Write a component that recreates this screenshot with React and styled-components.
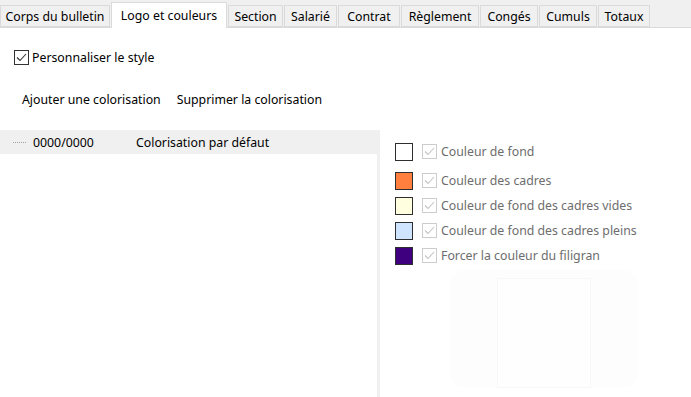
import React from "react";
import styled, { createGlobalStyle } from "styled-components";

const GlobalStyle = createGlobalStyle`
  html, body {
    margin: 0;
    padding: 0;
    background: #ffffff;
  }
  body {
    font-family: "Noto Sans", "Open Sans", sans-serif;
    font-size: 12.3px;
    color: #000;
  }
`;

const Page = styled.div`
  width: 691px;
  height: 397px;
  display: flex;
  flex-direction: column;
  overflow: hidden;
  background: #fff;
`;

const TabBar = styled.div`
  height: 28px;
  flex: none;
  display: flex;
  align-items: flex-end;
  background: #f0f0f0;
  border-bottom: 1px solid #dadada;
  box-sizing: border-box;
`;

const Tab = styled.div`
  box-sizing: border-box;
  width: ${({ $w }) => $w}px;
  height: ${({ $active }) => ($active ? 26 : 22)}px;
  margin-bottom: ${({ $active }) => ($active ? -1 : 0)}px;
  margin-right: 1px;
  display: flex;
  align-items: ${({ $active }) => ($active ? "flex-start" : "center")};
  justify-content: center;
  padding-top: ${({ $active }) => ($active ? 4 : 1)}px;
  background: ${({ $active }) => ($active ? "#fff" : "#f0f0f0")};
  border: 1px solid #dadada;
  border-bottom: ${({ $active }) => ($active ? "none" : "1px solid #dadada")};
  white-space: nowrap;
`;

const Content = styled.div`
  flex: 1;
  display: flex;
  flex-direction: column;
  min-height: 0;
`;

const StyleRow = styled.label`
  display: flex;
  align-items: center;
  gap: 3px;
  margin: 21px 0 0 14px;
  height: 16px;
`;

const Actions = styled.div`
  display: flex;
  gap: 16px;
  margin: 26px 0 0 22px;
  height: 16px;
  align-items: center;
`;

const Action = styled.span`
  cursor: default;
`;

const Split = styled.div`
  flex: 1;
  display: flex;
  margin-top: 23px;
  min-height: 0;
`;

const List = styled.div`
  width: 377px;
  flex: none;
  border-right: 3px solid #f0f0f0;
  box-sizing: content-box;
`;

const ListRow = styled.div`
  height: 24px;
  display: flex;
  align-items: center;
  background: ${({ $selected }) => ($selected ? "#f0f0f0" : "transparent")};
  margin-right: -3px;
  padding-left: 13px;
`;

const TreeDots = styled.span`
  width: 13px;
  height: 0;
  border-top: 1px dotted #a0a0a0;
  margin-right: 7px;
  margin-top: 1px;
`;

const Code = styled.span`
  width: 103px;
`;

const Label = styled.span``;

const ColorPanel = styled.div`
  flex: 1;
  display: flex;
  flex-direction: column;
  padding: 12px 0 0 15px;
  position: relative;
`;

const ColorRow = styled.div`
  display: flex;
  align-items: center;
  height: 19px;
  margin-bottom: ${({ $gap }) => $gap}px;
`;

const Swatch = styled.div`
  width: 18px;
  height: 18px;
  box-sizing: border-box;
  border: 1.5px solid #2e2e2e;
  background: ${({ $color }) => $color};
  margin-right: 9px;
`;

const DisabledText = styled.span`
  color: #6d6d6d;
  margin-left: 4px;
`;

const Preview = styled.div`
  position: absolute;
  left: 70px;
  top: 140px;
  width: 188px;
  height: 118px;
  border-radius: 16px;
  background: #fdfdfd;
  display: flex;
  justify-content: center;
`;

const PreviewSheet = styled.div`
  width: 92px;
  height: 108px;
  margin-top: 8px;
  border: 1px solid #f7f7f7;
  background: #fefefe;
`;

const CheckBox = ({ disabled }) => (
  <svg width="15" height="15" viewBox="0 0 15 15" style={{ flex: "none" }}>
    <rect
      x="0.5"
      y="0.5"
      width="14"
      height="14"
      fill="#fff"
      stroke={disabled ? "#cccccc" : "#333333"}
    />
    <path
      d="M3 7.5 L6 10.5 L12 4"
      fill="none"
      stroke={disabled ? "#c4c4c4" : "#333333"}
      strokeWidth="1.1"
    />
  </svg>
);

const tabs = [
  { label: "Corps du bulletin", w: 110 },
  { label: "Logo et couleurs", w: 116, active: true },
  { label: "Section", w: 55 },
  { label: "Salarié", w: 53 },
  { label: "Contrat", w: 62 },
  { label: "Règlement", w: 78 },
  { label: "Congés", w: 58 },
  { label: "Cumuls", w: 58 },
  { label: "Totaux", w: 52 },
];

const colors = [
  { color: "#ffffff", label: "Couleur de fond", gap: 10 },
  { color: "#ff7f3f", label: "Couleur des cadres", gap: 6 },
  { color: "#ffffdf", label: "Couleur de fond des cadres vides", gap: 6 },
  { color: "#cfe5ff", label: "Couleur de fond des cadres pleins", gap: 6 },
  { color: "#3f007f", label: "Forcer la couleur du filigran", gap: 0 },
];

export default function App() {
  return (
    <>
      <GlobalStyle />
      <Page>
        <TabBar>
          {tabs.map((t) => (
            <Tab key={t.label} $w={t.w} $active={t.active}>
              {t.label}
            </Tab>
          ))}
        </TabBar>
        <Content>
          <StyleRow>
            <CheckBox />
            <span>Personnaliser le style</span>
          </StyleRow>
          <Actions>
            <Action>Ajouter une colorisation</Action>
            <Action>Supprimer la colorisation</Action>
          </Actions>
          <Split>
            <List>
              <ListRow $selected>
                <TreeDots />
                <Code>0000/0000</Code>
                <Label>Colorisation par défaut</Label>
              </ListRow>
            </List>
            <ColorPanel>
              {colors.map((c) => (
                <ColorRow key={c.label} $gap={c.gap}>
                  <Swatch $color={c.color} />
                  <CheckBox disabled />
                  <DisabledText>{c.label}</DisabledText>
                </ColorRow>
              ))}
              <Preview>
                <PreviewSheet />
              </Preview>
            </ColorPanel>
          </Split>
        </Content>
      </Page>
    </>
  );
}
